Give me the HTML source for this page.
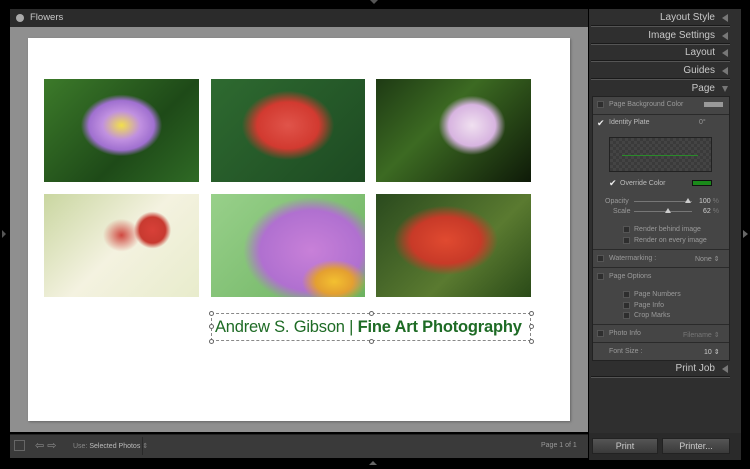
<!DOCTYPE html>
<html><head><style>
*{margin:0;padding:0;box-sizing:border-box}
body{width:750px;height:469px;background:#000;position:relative;overflow:hidden;font-family:"Liberation Sans",sans-serif}
.a{position:absolute}
.hdr{position:absolute;right:35px;color:#c8c8c8;font-size:10px}
.tri{position:absolute;left:722px;width:0;height:0;border-top:4px solid transparent;border-bottom:4px solid transparent;border-right:6px solid #777}
.line{position:absolute;left:591px;width:139px;height:2px;background:#1a1a1a;border-bottom:1px solid #555}
.s{position:absolute;color:#9a9a9a;font-size:7px}
.cb{position:absolute;width:7px;height:7px;background:#2e2e2e;border:1px solid #555}
.ph{position:absolute}
.h{position:absolute;width:5px;height:5px;border:1px solid #666;border-radius:50%;background:#fff}
</style></head><body>
<div class="a" style="left:10px;top:9px;width:578px;height:18px;background:#2b2b2b"></div>
<div class="a" style="left:16px;top:14px;width:8px;height:8px;border-radius:50%;background:#aaa"></div>
<div class="a" style="left:30px;top:12px;color:#c8c8c8;font-size:9.5px">Flowers</div>
<div class="a" style="left:10px;top:27px;width:578px;height:405px;background:#8f8f8f"></div>
<div class="a" style="left:28px;top:38px;width:542px;height:383px;background:#fff;box-shadow:1px 1px 2px #666"></div>
<div class="ph" style="left:44px;top:79px;width:155px;height:103px;background:radial-gradient(ellipse 35% 40% at 50% 45%,#f2e04a 0,#c090e0 35%,#a070d0 60%,transparent 75%),linear-gradient(135deg,#3c7a2a,#1e4a18 60%,#2f6a25)"></div>
<div class="ph" style="left:211px;top:79px;width:154px;height:103px;background:radial-gradient(ellipse 40% 45% at 50% 45%,#e0544a 0,#d23a30 50%,transparent 75%),linear-gradient(135deg,#2e6a30,#1d4a22)"></div>
<div class="ph" style="left:376px;top:79px;width:155px;height:103px;background:radial-gradient(ellipse 30% 40% at 62% 45%,#f0e0f0 0,#d7b4e0 50%,transparent 72%),linear-gradient(135deg,#1e3a14,#3c6a22 40%,#0e1a08)"></div>
<div class="ph" style="left:44px;top:194px;width:155px;height:103px;background:radial-gradient(ellipse 12% 18% at 70% 35%,#d84038 0,#c83a30 70%,transparent 100%),radial-gradient(ellipse 12% 16% at 50% 40%,#d04840,transparent 100%),linear-gradient(135deg,#c9d6a0,#f4f2e0 50%,#e8eccc)"></div>
<div class="ph" style="left:211px;top:194px;width:154px;height:103px;background:radial-gradient(ellipse 30% 30% at 80% 85%,#f3c030 0,#e4a030 40%,transparent 70%),radial-gradient(ellipse 55% 65% at 65% 55%,#c880d8 0,#b070d0 60%,transparent 80%),linear-gradient(135deg,#98d08a,#6cb260)"></div>
<div class="ph" style="left:376px;top:194px;width:155px;height:103px;background:radial-gradient(ellipse 45% 45% at 45% 45%,#e04a30 0,#c83a28 50%,transparent 75%),linear-gradient(135deg,#2a4a1e,#5a7a30 60%,#2a4a18)"></div>
<div class="a" style="left:211px;top:313px;width:320px;height:28px;border:1px dashed #888"></div>
<div class="h" style="left:209px;top:311px"></div><div class="h" style="left:369px;top:311px"></div><div class="h" style="left:529px;top:311px"></div>
<div class="h" style="left:209px;top:324px"></div><div class="h" style="left:529px;top:324px"></div>
<div class="h" style="left:209px;top:339px"></div><div class="h" style="left:369px;top:339px"></div><div class="h" style="left:529px;top:339px"></div>
<div class="a" style="left:215px;top:318px;color:#1e6b25;font-size:16.5px;white-space:nowrap;letter-spacing:-0.2px">Andrew S. Gibson | <b>Fine Art Photography</b></div>
<div class="a" style="left:10px;top:434px;width:578px;height:24px;background:#3a3a3a;border-top:1px solid #222"></div>
<div class="a" style="left:14px;top:440px;width:11px;height:11px;border:1px solid #666"></div>
<div class="a" style="left:35px;top:439px;color:#888;font-size:11px">⇦ ⇨</div>
<div class="a" style="left:73px;top:442px;color:#888;font-size:7px">Use: <span style="color:#bbb">Selected Photos</span> ⇕</div>
<div class="a" style="left:142px;top:437px;width:1px;height:18px;background:#2a2a2a"></div>
<div class="a" style="left:541px;top:442px;color:#999;font-size:7px">Page 1 of 1</div>
<div class="a" style="left:369px;top:461px;width:0;height:0;border-left:4px solid transparent;border-right:4px solid transparent;border-bottom:4px solid #666"></div>
<div class="a" style="left:370px;top:0;width:0;height:0;border-left:4px solid transparent;border-right:4px solid transparent;border-top:4px solid #555"></div>
<div class="a" style="left:2px;top:230px;width:0;height:0;border-top:4px solid transparent;border-bottom:4px solid transparent;border-left:4px solid #555"></div>
<div class="a" style="left:743px;top:230px;width:0;height:0;border-top:4px solid transparent;border-bottom:4px solid transparent;border-left:5px solid #666"></div>
<div class="a" style="left:589px;top:9px;width:152px;height:424px;background:#2f2f2f"></div>
<div class="a" style="left:589px;top:433px;width:152px;height:27px;background:#2a2a2a"></div>
<div class="hdr" style="top:12px">Layout Style</div><div class="tri" style="top:14px"></div>
<div class="line" style="top:25px"></div>
<div class="hdr" style="top:30px">Image Settings</div><div class="tri" style="top:32px"></div>
<div class="line" style="top:43px"></div>
<div class="hdr" style="top:47px">Layout</div><div class="tri" style="top:49px"></div>
<div class="line" style="top:60px"></div>
<div class="hdr" style="top:65px">Guides</div><div class="tri" style="top:67px"></div>
<div class="line" style="top:78px"></div>
<div class="hdr" style="top:83px">Page</div>
<div class="a" style="left:722px;top:86px;width:0;height:0;border-left:3.5px solid transparent;border-right:3.5px solid transparent;border-top:6px solid #777"></div>
<div class="a" style="left:592px;top:96px;width:138px;height:265px;background:#454545;border:1px solid #222"></div>
<div class="a" style="left:593px;top:114px;width:136px;height:1px;background:#2a2a2a"></div>
<div class="cb" style="left:597px;top:101px"></div><div class="s" style="left:609px;top:101px">Page Background Color</div>
<div class="a" style="left:704px;top:102px;width:19px;height:5px;background:#999"></div>
<div class="a" style="left:597px;top:118px;color:#eee;font-size:9px">✔</div><div class="s" style="left:609px;top:119px;color:#bbb">Identity Plate</div>
<div class="s" style="left:699px;top:119px">0°</div>
<div class="a" style="left:609px;top:137px;width:103px;height:35px;border:1px solid #222;background:repeating-conic-gradient(#444 0 25%,#3a3a3a 0 50%) 0 0/6px 6px"></div>
<div class="a" style="left:622px;top:155px;width:76px;height:1px;background:#2a8a2a"></div>
<div class="a" style="left:609px;top:178px;color:#eee;font-size:9px">✔</div><div class="s" style="left:620px;top:180px;color:#bbb">Override Color</div>
<div class="a" style="left:692px;top:180px;width:20px;height:6px;background:#1a8a1a;border:1px solid #111"></div>
<div class="s" style="left:605px;top:198px">Opacity</div>
<div class="a" style="left:634px;top:201px;width:58px;height:1px;background:#777"></div>
<div class="a" style="left:685px;top:198px;width:0;height:0;border-left:3px solid transparent;border-right:3px solid transparent;border-bottom:5px solid #ccc"></div>
<div class="s" style="left:699px;top:198px;color:#ccc">100 <span style="color:#777">%</span></div>
<div class="s" style="left:613px;top:208px">Scale</div>
<div class="a" style="left:634px;top:211px;width:58px;height:1px;background:#777"></div>
<div class="a" style="left:665px;top:208px;width:0;height:0;border-left:3px solid transparent;border-right:3px solid transparent;border-bottom:5px solid #ccc"></div>
<div class="s" style="left:703px;top:208px;color:#ccc">62 <span style="color:#777">%</span></div>
<div class="cb" style="left:623px;top:226px"></div><div class="s" style="left:634px;top:226px">Render behind image</div>
<div class="cb" style="left:623px;top:237px"></div><div class="s" style="left:634px;top:237px">Render on every image</div>
<div class="a" style="left:593px;top:249px;width:136px;height:1px;background:#2a2a2a"></div>
<div class="cb" style="left:597px;top:255px"></div><div class="s" style="left:609px;top:255px">Watermarking :</div><div class="s" style="left:695px;top:255px">None ⇕</div>
<div class="a" style="left:593px;top:267px;width:136px;height:1px;background:#2a2a2a"></div>
<div class="cb" style="left:597px;top:273px"></div><div class="s" style="left:609px;top:273px">Page Options</div>
<div class="cb" style="left:623px;top:291px"></div><div class="s" style="left:634px;top:291px">Page Numbers</div>
<div class="cb" style="left:623px;top:302px"></div><div class="s" style="left:634px;top:302px">Page Info</div>
<div class="cb" style="left:623px;top:312px"></div><div class="s" style="left:634px;top:312px">Crop Marks</div>
<div class="a" style="left:593px;top:324px;width:136px;height:1px;background:#2a2a2a"></div>
<div class="cb" style="left:597px;top:330px"></div><div class="s" style="left:609px;top:330px">Photo Info</div><div class="s" style="left:683px;top:331px;color:#777">Filename ⇕</div>
<div class="a" style="left:593px;top:342px;width:136px;height:1px;background:#2a2a2a"></div>
<div class="s" style="left:609px;top:348px">Font Size :</div><div class="s" style="left:704px;top:348px;color:#ccc">10 ⇕</div>
<div class="hdr" style="top:363px">Print Job</div><div class="tri" style="top:365px"></div>
<div class="line" style="top:376px"></div>
<div class="a" style="left:592px;top:438px;width:66px;height:16px;background:linear-gradient(#555,#3a3a3a);border:1px solid #222;color:#ccc;font-size:9px;text-align:center;line-height:14px">Print</div>
<div class="a" style="left:662px;top:438px;width:68px;height:16px;background:linear-gradient(#555,#3a3a3a);border:1px solid #222;color:#ccc;font-size:9px;text-align:center;line-height:14px">Printer...</div>
</body></html>
